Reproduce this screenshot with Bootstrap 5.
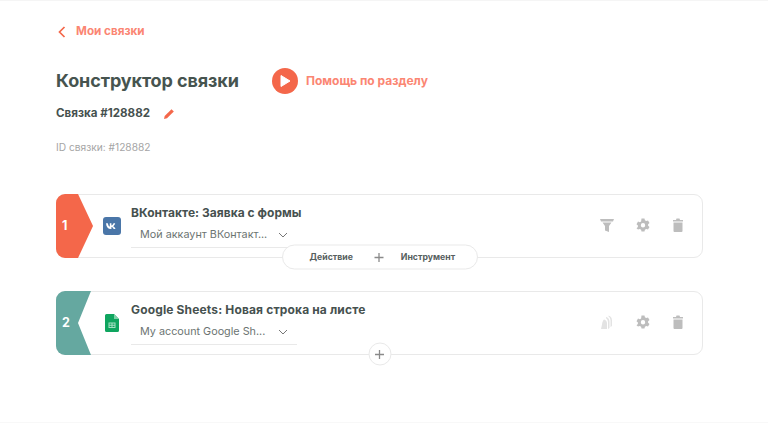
<!DOCTYPE html>
<html lang="ru"><head><meta charset="utf-8">
<link href="https://cdn.jsdelivr.net/npm/bootstrap@5.3.0/dist/css/bootstrap.min.css" rel="stylesheet">
<style>
html,body{height:423px;overflow:hidden}
body{background:#fff;font-family:Inter,"Liberation Sans",sans-serif;color:#46514f;border-top:1px solid #f5f5f5;border-bottom:1px solid #f8f8f8}
.shell{padding:21px 65px 0 56px}
.back-link{color:#fb8673;font-size:11.7px;font-weight:700;height:20px;gap:10px;margin-left:2px;text-decoration:none}
.head-row{margin-top:26px;height:25px}
.page-title{font-size:18px;font-weight:700;margin:0;width:216px;line-height:25px;color:#46544f;letter-spacing:-.1px}
.help-link{color:#fb8673;font-size:12px;font-weight:700;gap:8px;text-decoration:none}
.play-disc{width:26px;height:26px;border-radius:50%;background:#f4674a}
.sub-row{margin-top:11px;height:20px;gap:13px}
.sub-name{font-size:11.6px;font-weight:700}
.id-line{margin-top:15px;font-size:10.2px;line-height:16px;color:#a5a5a5}
.flow{margin-top:39px;gap:33px}
.step{height:64px;border:1px solid #e9e9e9;border-radius:9px;background:#fff}
.tag{width:37px;flex:none;margin:-1px 0 -1px -1px;height:64px;border-radius:9px 0 0 9px;color:#fff;font-weight:700;font-size:12.5px;padding-left:6px}
.tag-a{background:#f4674a;clip-path:polygon(0 0,22px 0,37px 50%,22px 100%,0 100%)}
.tag-b{background:#65a8a0;clip-path:polygon(0 0,35px 0,22px 50%,35px 100%,0 100%)}
.app-icon{width:18px;flex:none;margin-left:10px;margin-right:10px}
.step-body{width:166px;margin-top:10px}
.step-title{font-size:12px;font-weight:700;line-height:16px;white-space:nowrap;letter-spacing:.03px}
.step-wide{letter-spacing:.15px}
.account{height:27px;border-bottom:1px solid #e9e9e9;padding:2px 9px 0;font-size:10.8px;color:#6c7472;white-space:nowrap}
.tools{margin-left:auto;gap:19.500px;padding-right:16px;padding-bottom:2px}
.connector{left:50%;bottom:0;transform:translate(-50%,50%);background:#fff;border:1px solid #e9e9e9;z-index:2}
.connector-wide{width:196px;height:25px;border-radius:13px;font-size:8.7px;font-weight:700;color:#56605e;padding-left:27px}
.connector-wide svg{margin:0 17px 0 21px}
.connector-round{width:23px;height:23px;border-radius:50%}
</style></head>
<body>
<main class="shell">
<a class="back-link d-flex align-items-center" href="#"><svg width="8" height="12" viewBox="0 0 8 12"><path d="M6.500 1 1.500 6l5 5" fill="none" stroke="#f4674a" stroke-width="1.700"/></svg><span>Мои связки</span></a>
<div class="head-row d-flex align-items-center">
<h1 class="page-title">Конструктор связки</h1>
<a class="help-link d-flex align-items-center" href="#"><span class="play-disc d-flex align-items-center justify-content-center"><svg width="12" height="14" viewBox="0 0 12 14"><path d="M2 1.500 11 7l-9 5.500z" fill="#fff" stroke="#fff" stroke-linejoin="round"/></svg></span><span>Помощь по разделу</span></a>
</div>
<div class="sub-row d-flex align-items-center"><span class="sub-name">Связка #128882</span>
<svg width="12" height="12" viewBox="0 0 12 12"><path d="M1 11l.7-3L8.500 1.200l2.300 2.300L4 10.300z" fill="#f4674a"/></svg></div>
<div class="id-line">ID связки: #128882</div>
<div class="flow d-flex flex-column">
<section class="step d-flex position-relative">
<div class="tag tag-a d-flex align-items-center">1</div>
<div class="app-icon d-flex align-items-center"><svg width="18" height="18" viewBox="0 0 18 18"><rect width="18" height="18" rx="3" fill="#4a76a8"/><path d="M3 6.200h1.800c.4 2 1.200 3.200 2 3.500V6.200h1.600v2.300c.9-.2 1.700-1.200 2.100-2.300h1.700c-.3 1.400-1.200 2.500-2 3 .9.500 1.800 1.400 2.300 2.800h-1.900c-.4-1.100-1.200-1.900-2.200-2v2H7.800C5 12 3.300 9.900 3 6.200z" fill="#fff"/></svg></div>
<div class="step-body"><div class="step-title">ВКонтакте: Заявка с формы</div>
<div class="account d-flex align-items-center justify-content-between"><span>Мой аккаунт ВКонтакт...</span><svg width="10" height="6" viewBox="0 0 10 6"><path d="M1 1l4 4 4-4" fill="none" stroke="#777" stroke-width="1"/></svg></div></div>
<div class="tools d-flex align-items-center">
<svg width="16" height="16" viewBox="0 0 16 16"><path d="M1 2h14l-1 2.500H2zM3.500 5.500h9L10 9v6l-4-1.500V9z" fill="#bdbdbd"/></svg>
<svg width="16" height="16" viewBox="0 0 16 16"><path fill-rule="evenodd" d="M6.500 1.500h3l.4 1.800 1.300.7 1.800-.6 1.500 2.600-1.400 1.200v1.600l1.400 1.200-1.500 2.600-1.800-.6-1.300.7-.4 1.800h-3l-.4-1.800-1.300-.7-1.800.6L1.500 11.200 2.900 10V8.400L1.500 7.200 3 4.600l1.800.6 1.300-.7zM8 6a2.200 2.200 0 1 0 0 4.400A2.200 2.200 0 0 0 8 6z" fill="#bdbdbd"/></svg>
<svg width="16" height="16" viewBox="0 0 16 16"><path d="M3 3h3l.5-1.500h3L10 3h3v1.500H3zM3.500 5.500h9V14a1 1 0 0 1-1 1h-7a1 1 0 0 1-1-1z" fill="#bdbdbd"/></svg>
</div>
<div class="connector connector-wide position-absolute d-flex align-items-center"><span>Действие</span><svg width="10" height="10" viewBox="0 0 10 10"><path d="M5 .5v9M.5 5h9" stroke="#8a8a8a" stroke-width="1.300"/></svg><span>Инструмент</span></div>
</section>
<section class="step d-flex position-relative">
<div class="tag tag-b d-flex align-items-center">2</div>
<div class="app-icon d-flex align-items-center justify-content-center"><svg width="14" height="18" viewBox="0 0 14 18"><path d="M1.500 0H9l5 5v11.500a1.500 1.500 0 0 1-1.500 1.500h-11A1.500 1.500 0 0 1 0 16.500v-15A1.500 1.500 0 0 1 1.500 0z" fill="#0fa55f"/><path d="M9 0l5 5H9z" fill="#7fd0a8"/><path d="M3.500 8.500h7v5.500h-7zM4.500 9.500v1.300h2V9.500zM7.500 9.500v1.300h2V9.500zM4.500 11.800V13h2v-1.200zM7.500 11.800V13h2v-1.200z" fill="#a6e0c3" fill-rule="evenodd"/></svg></div>
<div class="step-body"><div class="step-title step-wide">Google Sheets: Новая строка на листе</div>
<div class="account d-flex align-items-center justify-content-between"><span>My account Google Sh...</span><svg width="10" height="6" viewBox="0 0 10 6"><path d="M1 1l4 4 4-4" fill="none" stroke="#777" stroke-width="1"/></svg></div></div>
<div class="tools d-flex align-items-center">
<svg width="16" height="16" viewBox="0 0 16 16"><path d="M9.500 1.500c2.200.5 3.500 2.500 3.500 5v5.500l-1.500 1V7c0-2-.7-3.600-2-4.500zM7 3c2 .4 3.500 2.300 3.500 4.500V14l-1.500 1V8.500C9 6.500 8.300 5 7 4.200zM5 5.500c2 .5 3 2 3 4V15H2l1-4.500C3.300 8 4 6.500 5 5.500z" fill="#e3e3e3"/></svg>
<svg width="16" height="16" viewBox="0 0 16 16"><path fill-rule="evenodd" d="M6.500 1.500h3l.4 1.800 1.300.7 1.800-.6 1.500 2.600-1.400 1.200v1.600l1.400 1.200-1.500 2.600-1.800-.6-1.300.7-.4 1.800h-3l-.4-1.800-1.300-.7-1.800.6L1.500 11.200 2.900 10V8.400L1.500 7.200 3 4.600l1.800.6 1.300-.7zM8 6a2.200 2.200 0 1 0 0 4.400A2.200 2.200 0 0 0 8 6z" fill="#bdbdbd"/></svg>
<svg width="16" height="16" viewBox="0 0 16 16"><path d="M3 3h3l.5-1.500h3L10 3h3v1.500H3zM3.500 5.500h9V14a1 1 0 0 1-1 1h-7a1 1 0 0 1-1-1z" fill="#bdbdbd"/></svg>
</div>
<div class="connector connector-round position-absolute d-flex align-items-center justify-content-center"><svg width="10" height="10" viewBox="0 0 10 10"><path d="M5 .5v9M.5 5h9" stroke="#8a8a8a" stroke-width="1.300"/></svg></div>
</section>
</div>
</main>
</body></html>
